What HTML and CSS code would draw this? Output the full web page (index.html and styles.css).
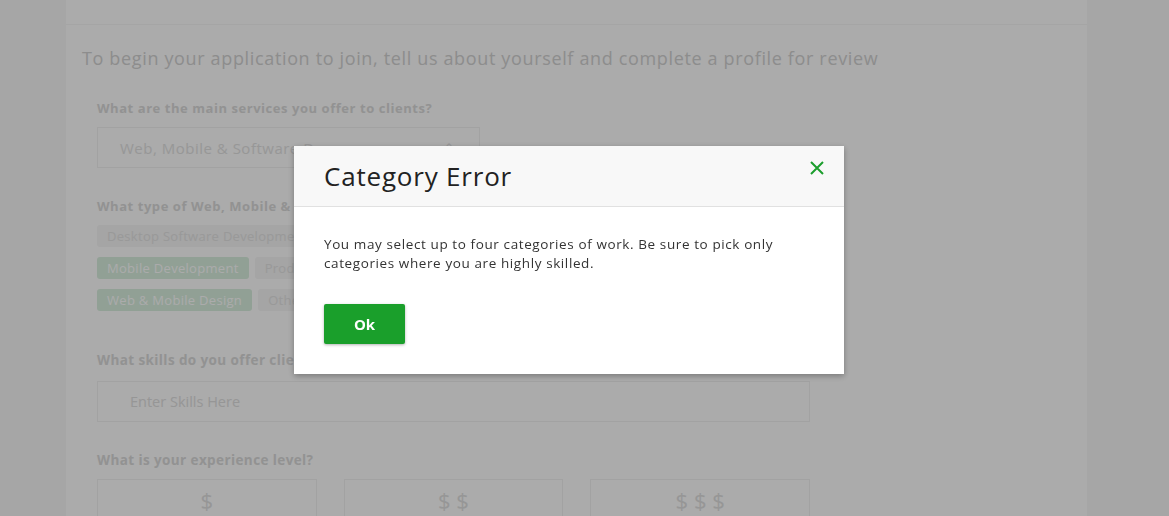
FILE: index.html
```html
<!DOCTYPE html>
<html lang="en">
<head>
<meta charset="utf-8">
<title>Apply</title>
<link rel="stylesheet" href="styles.css">
</head>
<body>
<div class="page">
  <div class="card">
    <div class="card-top"></div>
    <div class="card-body">
      <h1 class="intro">To begin your application to join, tell us about yourself and complete a profile for review</h1>

      <div class="field">
        <label class="label">What are the main services you offer to clients?</label>
        <div class="select">
          <span>Web, Mobile &amp; Software Dev</span>
          <span class="chev">&#8963;&#8964;</span>
        </div>
      </div>

      <div class="field">
        <label class="label">What type of Web, Mobile &amp; Software Development do you offer?</label>
        <div class="tags">
          <div class="tag-row"><span class="tag">Desktop Software Development</span><span class="tag">Ecommerce Development</span></div>
          <div class="tag-row"><span class="tag on">Mobile Development</span><span class="tag">Product Management</span></div>
          <div class="tag-row"><span class="tag on">Web &amp; Mobile Design</span><span class="tag">Other - Software Development</span></div>
        </div>
      </div>

      <div class="field skills">
        <label class="label alt">What skills do you offer clients?</label>
        <div class="input">Enter Skills Here</div>
      </div>

      <div class="field">
        <label class="label alt tight">What is your experience level?</label>
        <div class="levels">
          <div class="level">$</div>
          <div class="level">$ $</div>
          <div class="level">$ $ $</div>
        </div>
      </div>
    </div>
  </div>
</div>

<div class="backdrop"></div>

<div class="modal">
  <div class="modal-head">
    <h2 class="modal-title">Category Error</h2>
    <button class="close" aria-label="Close">
      <svg width="16" height="16" viewBox="0 0 16 16"><path d="M2 2 L14 14 M14 2 L2 14" stroke="#1c9e2d" stroke-width="2" fill="none"/></svg>
    </button>
  </div>
  <div class="modal-body">
    <p class="msg">You may select up to four categories of work. Be sure to pick only categories where you are highly skilled.</p>
    <button class="ok">Ok</button>
  </div>
</div>
</body>
</html>
```

FILE: styles.css
```css
* { box-sizing: border-box; }
html, body { margin: 0; padding: 0; }
body {
  background: #f8f8f8;
  font-family: "Open Sans", "Liberation Sans", sans-serif;
  height: 516px;
  overflow: hidden;
}
.page {
  margin-left: 66px;
  width: 1021px;
}
.card {
  background: #ffffff;
  height: 516px;
  overflow: hidden;
}
.card-top {
  height: 25px;
  border-bottom: 1px solid #f7f7f7;
}
.card-body {
  padding: 21px 16px 0 16px;
}
.intro {
  margin: 0 0 29px 0;
  font-size: 18px;
  font-weight: 400;
  color: #d2d2d2;
  letter-spacing: 0.65px;
  white-space: nowrap;
}
.field { padding-left: 15px; margin-bottom: 29px; }
.label {
  display: block;
  font-size: 13px;
  font-weight: 700;
  color: #dadada;
  margin-bottom: 10px;
  letter-spacing: 0.55px;
  white-space: nowrap;
}
.label.alt { font-size: 13.5px; letter-spacing: 0.4px; margin-bottom: 12px; }
.label.alt.tight { margin-bottom: 10px; }
.select {
  width: 383px;
  height: 41px;
  border: 1px solid #f2f2f2;
  display: flex;
  align-items: center;
  justify-content: space-between;
  padding: 0 14px 0 22px;
  font-size: 15px;
  letter-spacing: 0.5px;
  color: #e2e2e2;
}
.chev { font-size: 12px; }
.tags { display: flex; flex-direction: column; gap: 10px; }
.tag-row { display: flex; gap: 6px; }
.tag {
  height: 22px;
  line-height: 22px;
  padding: 0 10px;
  font-size: 13px;
  letter-spacing: 0.3px;
  background: #f6f6f6;
  color: #e4e4e4;
  border-radius: 3px;
  white-space: nowrap;
}
.tag.on { background: #d9efdf; color: #ffffff; }
.skills { margin-top: 40px; }
.input {
  width: 713px;
  height: 41px;
  border: 1px solid #f2f2f2;
  display: flex;
  align-items: center;
  padding-left: 32px;
  font-size: 14.5px;
  color: #e0e0e0;
}
.levels { display: flex; gap: 27px; width: 713px; }
.level {
  flex: 1;
  height: 60px;
  border: 1px solid #f2f2f2;
  text-align: center;
  padding-top: 5px;
  font-size: 22px;
  line-height: 30px;
  color: #e0e0e0;
}

.backdrop {
  position: fixed;
  inset: 0;
  background: rgba(0, 0, 0, 0.33);
}
.modal {
  position: fixed;
  left: 294px;
  top: 146px;
  width: 550px;
  background: #ffffff;
  box-shadow: 0 2px 6px rgba(0, 0, 0, 0.3);
}
.modal-head {
  height: 61px;
  background: #f8f8f8;
  border-bottom: 1px solid #e1e1e1;
  display: flex;
  align-items: center;
  justify-content: space-between;
  padding: 0 19px 0 30px;
}
.modal-title {
  margin: 0;
  font-size: 26px;
  font-weight: 400;
  color: #222222;
  letter-spacing: 0.8px;
}
.close {
  border: 0;
  background: none;
  padding: 0;
  width: 16px;
  height: 16px;
  margin-top: -16px;
  cursor: pointer;
}
.close svg { display: block; }
.modal-body { padding: 28px 30px 30px 30px; }
.msg {
  margin: 0 0 31px 0;
  font-size: 13.5px;
  line-height: 19px;
  letter-spacing: 0.6px;
  color: #333333;
}
.ok {
  width: 81px;
  height: 40px;
  border: 0;
  border-radius: 2px;
  background: #1a9f2b;
  color: #ffffff;
  font-family: "Open Sans", "Liberation Sans", sans-serif;
  font-size: 15px;
  font-weight: 700;
  box-shadow: 0 1px 3px rgba(0, 0, 0, 0.3);
  display: block;
}
```
